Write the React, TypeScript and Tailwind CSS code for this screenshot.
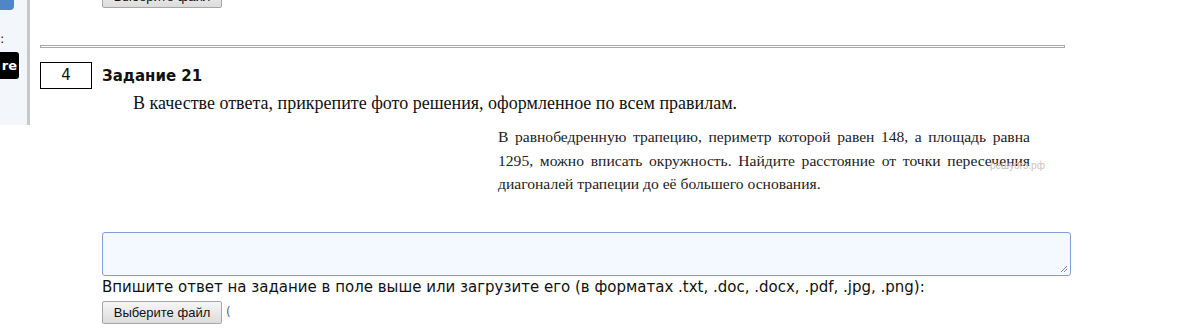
import React from 'react';

const sans = { fontFamily: '"DejaVu Sans", Verdana, sans-serif' };
const serif = { fontFamily: '"Liberation Serif", "Times New Roman", serif' };

const FileButton: React.FC = () => (
  <button
    className="h-[23px] w-[120px] rounded-[2px] border border-[#a6a6a6] bg-gradient-to-b from-[#f6f6f6] to-[#dcdcdc] text-[13px] leading-none text-[#111]"
    style={{ fontFamily: '"Liberation Sans", Arial, sans-serif' }}
  >
    Выберите файл
  </button>
);

const App: React.FC = () => {
  const task = {
    number: '4',
    title: 'Задание 21',
    hint: 'В качестве ответа, прикрепите фото решения, оформленное по всем правилам.',
    lines: [
      'В равнобедренную трапецию, периметр которой равен 148, а площадь равна',
      '1295, можно вписать окружность. Найдите расстояние от точки пересечения',
      'диагоналей трапеции до её большего основания.',
    ],
    note: 'Впишите ответ на задание в поле выше или загрузите его (в форматах .txt, .doc, .docx, .pdf, .jpg, .png):',
  };

  return (
    <div className="flex h-[336px] w-[1202px] overflow-hidden bg-white">
      {/* left sidebar, cut off */}
      <div className="h-[125px] w-[30px] shrink-0 border-r-[3px] border-[#c8c8c8] bg-[#f3f7fb]">
        <div className="h-[10px] w-[14px] rounded-br-[4px] bg-[#4f86c6]" />
        <div className="mt-[22px] text-[13px] leading-[14px] text-[#222]" style={sans}>
          :
        </div>
        <div
          className="mt-[6px] flex h-[27px] w-[19px] items-center justify-end rounded-r-[3px] bg-black pr-[2px] text-[13px] font-bold text-white"
          style={sans}
        >
          re
        </div>
      </div>

      <div className="flex-1">
        <div className="flex h-[8px] items-end overflow-hidden pl-[72px]">
          <FileButton />
        </div>

        <div className="ml-[10px] mt-[37px] h-[3px] w-[1025px] border border-[#a8a8a8] bg-white" />

        <div className="ml-[10px] mt-[14px] flex gap-[10px]">
          <div
            className="flex h-[27px] w-[52px] shrink-0 items-center justify-center border border-black text-[15px] text-[#111]"
            style={sans}
          >
            {task.number}
          </div>

          <div className="flex flex-col">
            <div className="mt-[4px] text-[15px] font-bold leading-[20px] text-[#111]" style={sans}>
              {task.title}
            </div>
            <p className="ml-[31px] mt-[7px] text-[18px] leading-[20px] text-[#111]" style={serif}>
              {task.hint}
            </p>

            <div className="relative ml-[396px] mt-[12px] w-[532px] text-[#222]">
              {task.lines.map((line, i) => (
                <div
                  key={i}
                  className={`text-[15.6px] leading-[23.5px] ${i < 2 ? 'text-justify [text-align-last:justify]' : ''}`}
                  style={serif}
                >
                  {line}
                </div>
              ))}
              <span
                className="absolute left-[492px] top-[36px] text-[10px] leading-none text-[#c4c4c4]"
                style={{ fontFamily: '"Liberation Sans", Arial, sans-serif' }}
              >
                решуогэ.рф
              </span>
            </div>

            <div className="relative mt-[36px] h-[44px] w-[969px] rounded-[3px] border border-[#7f9fd2] bg-[#f4f8ff]">
              <svg className="absolute bottom-[2px] right-[2px]" width="9" height="9" viewBox="0 0 9 9">
                <path d="M8 2 L2 8 M8 5 L5 8" stroke="#888" strokeWidth="1" />
              </svg>
            </div>

            <div className="mt-[1px] text-[15px] leading-[20px] text-[#111]" style={sans}>
              {task.note}
            </div>

            <div className="mt-[4px] flex items-center gap-[4px]">
              <FileButton />
              <span className="text-[12px] text-[#666]" style={sans}>(</span>
            </div>
          </div>
        </div>
      </div>
    </div>
  );
};

export default App;
